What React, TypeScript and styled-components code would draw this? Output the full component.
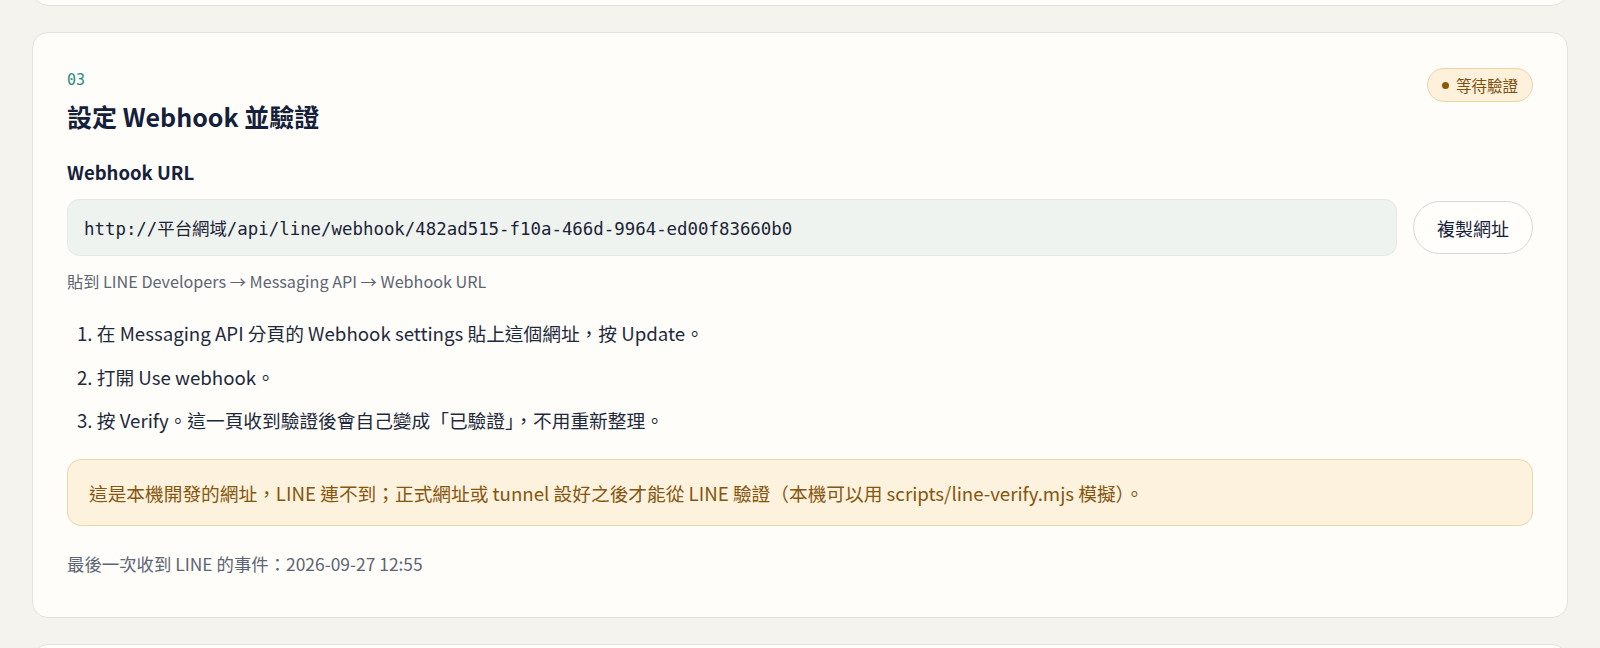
import React from "react";
import styled, { createGlobalStyle } from "styled-components";

const GlobalStyle = createGlobalStyle`
  html, body { margin: 0; padding: 0; }
  body {
    background: #f5f3ee;
    font-family: "Noto Sans CJK TC", "Noto Sans", sans-serif;
    color: #1b2436;
    overflow: hidden;
  }
`;

const Page = styled.div`
  display: flex;
  flex-direction: column;
  gap: 26px;
  padding: 0 32px;
`;

const StubCard = styled.div`
  margin-top: -60px;
  height: 64px;
  background: #fffdf9;
  border: 1px solid #e3e3dd;
  border-radius: 16px;
`;

const Card = styled.section`
  background: #fffdf9;
  border: 1px solid #e3e3dd;
  border-radius: 16px;
  padding: 35px 34px 42px 34px;
  display: flex;
  flex-direction: column;
`;

const Header = styled.div`
  display: flex;
  justify-content: space-between;
  align-items: flex-start;
`;

const HeadText = styled.div`
  display: flex;
  flex-direction: column;
`;

const StepNo = styled.div`
  font-family: "DejaVu Sans Mono", monospace;
  font-size: 15px;
  line-height: 25px;
  color: #2b8b7b;
`;

const Title = styled.h2`
  margin: 7px 0 0 0;
  font-size: 25px;
  line-height: 32px;
  font-weight: 700;
  color: #15203a;
`;

const Badge = styled.div`
  display: inline-flex;
  align-items: center;
  gap: 7px;
  height: 34px;
  box-sizing: border-box;
  padding: 0 14px 0 14px;
  border-radius: 999px;
  background: #fdf1db;
  border: 1px solid #ecd3a2;
  color: #7c4f0d;
  font-size: 15.5px;
`;

const Dot = styled.span`
  width: 7px;
  height: 7px;
  border-radius: 50%;
  background: #8a5806;
`;

const Label = styled.div`
  margin-top: 28px;
  font-size: 18.5px;
  line-height: 24px;
  font-weight: 700;
  color: #15203a;
`;

const UrlRow = styled.div`
  margin-top: 15px;
  display: flex;
  align-items: center;
  gap: 16px;
`;

const UrlBox = styled.div`
  flex: 1;
  height: 57px;
  box-sizing: border-box;
  display: flex;
  align-items: center;
  padding: 0 16px;
  background: #eff3f0;
  border: 1px solid #e5e9e5;
  border-radius: 12px;
  font-family: "DejaVu Sans Mono", "Noto Sans CJK TC", monospace;
  font-size: 17.4px;
  color: #1b2436;
  white-space: nowrap;
`;

const CopyButton = styled.button`
  height: 53px;
  padding: 0 23px;
  border-radius: 999px;
  background: #fffefb;
  border: 1px solid #d5d8da;
  font-family: "Noto Sans CJK TC", sans-serif;
  font-size: 18px;
  color: #15203a;
  cursor: pointer;
`;

const Hint = styled.div`
  margin-top: 14px;
  font-size: 16.2px;
  line-height: 22px;
  color: #5c6575;
`;

const Steps = styled.ol`
  margin: 28px 0 0 0;
  padding: 0 0 0 10px;
  list-style: decimal inside;
  display: flex;
  flex-direction: column;
  gap: 17.5px;
`;

const Step = styled.li`
  font-size: 18.7px;
  line-height: 26px;
  color: #1e2a3c;
`;

const Warning = styled.div`
  margin-top: 26px;
  height: 67px;
  box-sizing: border-box;
  display: flex;
  align-items: center;
  padding: 0 21px;
  background: #fdf2dd;
  border: 1px solid #eed7a6;
  border-radius: 14px;
  color: #85560f;
  font-size: 18.7px;
`;

const LastEvent = styled.div`
  margin-top: 27px;
  font-size: 17.4px;
  line-height: 22px;
  color: #5c6575;
`;

const NextCard = styled.div`
  height: 80px;
  background: #fffdf9;
  border: 1px solid #e3e3dd;
  border-radius: 16px;
`;

export default function App() {
  return (
    <>
      <GlobalStyle />
      <Page>
        <StubCard />
        <Card>
          <Header>
            <HeadText>
              <StepNo>03</StepNo>
              <Title>設定 Webhook 並驗證</Title>
            </HeadText>
            <Badge>
              <Dot />
              等待驗證
            </Badge>
          </Header>
          <Label>Webhook URL</Label>
          <UrlRow>
            <UrlBox>http://平台網域/api/line/webhook/482ad515-f10a-466d-9964-ed00f83660b0</UrlBox>
            <CopyButton>複製網址</CopyButton>
          </UrlRow>
          <Hint>貼到 LINE Developers → Messaging API → Webhook URL</Hint>
          <Steps>
            <Step>在 Messaging API 分頁的 Webhook settings 貼上這個網址，按 Update。</Step>
            <Step>打開 Use webhook。</Step>
            <Step>按 Verify。這一頁收到驗證後會自己變成「已驗證」，不用重新整理。</Step>
          </Steps>
          <Warning>
            這是本機開發的網址，LINE 連不到；正式網址或 tunnel 設好之後才能從 LINE 驗證（本機可以用 scripts/line-verify.mjs 模擬）。
          </Warning>
          <LastEvent>最後一次收到 LINE 的事件：2026-09-27 12:55</LastEvent>
        </Card>
        <NextCard />
      </Page>
    </>
  );
}
